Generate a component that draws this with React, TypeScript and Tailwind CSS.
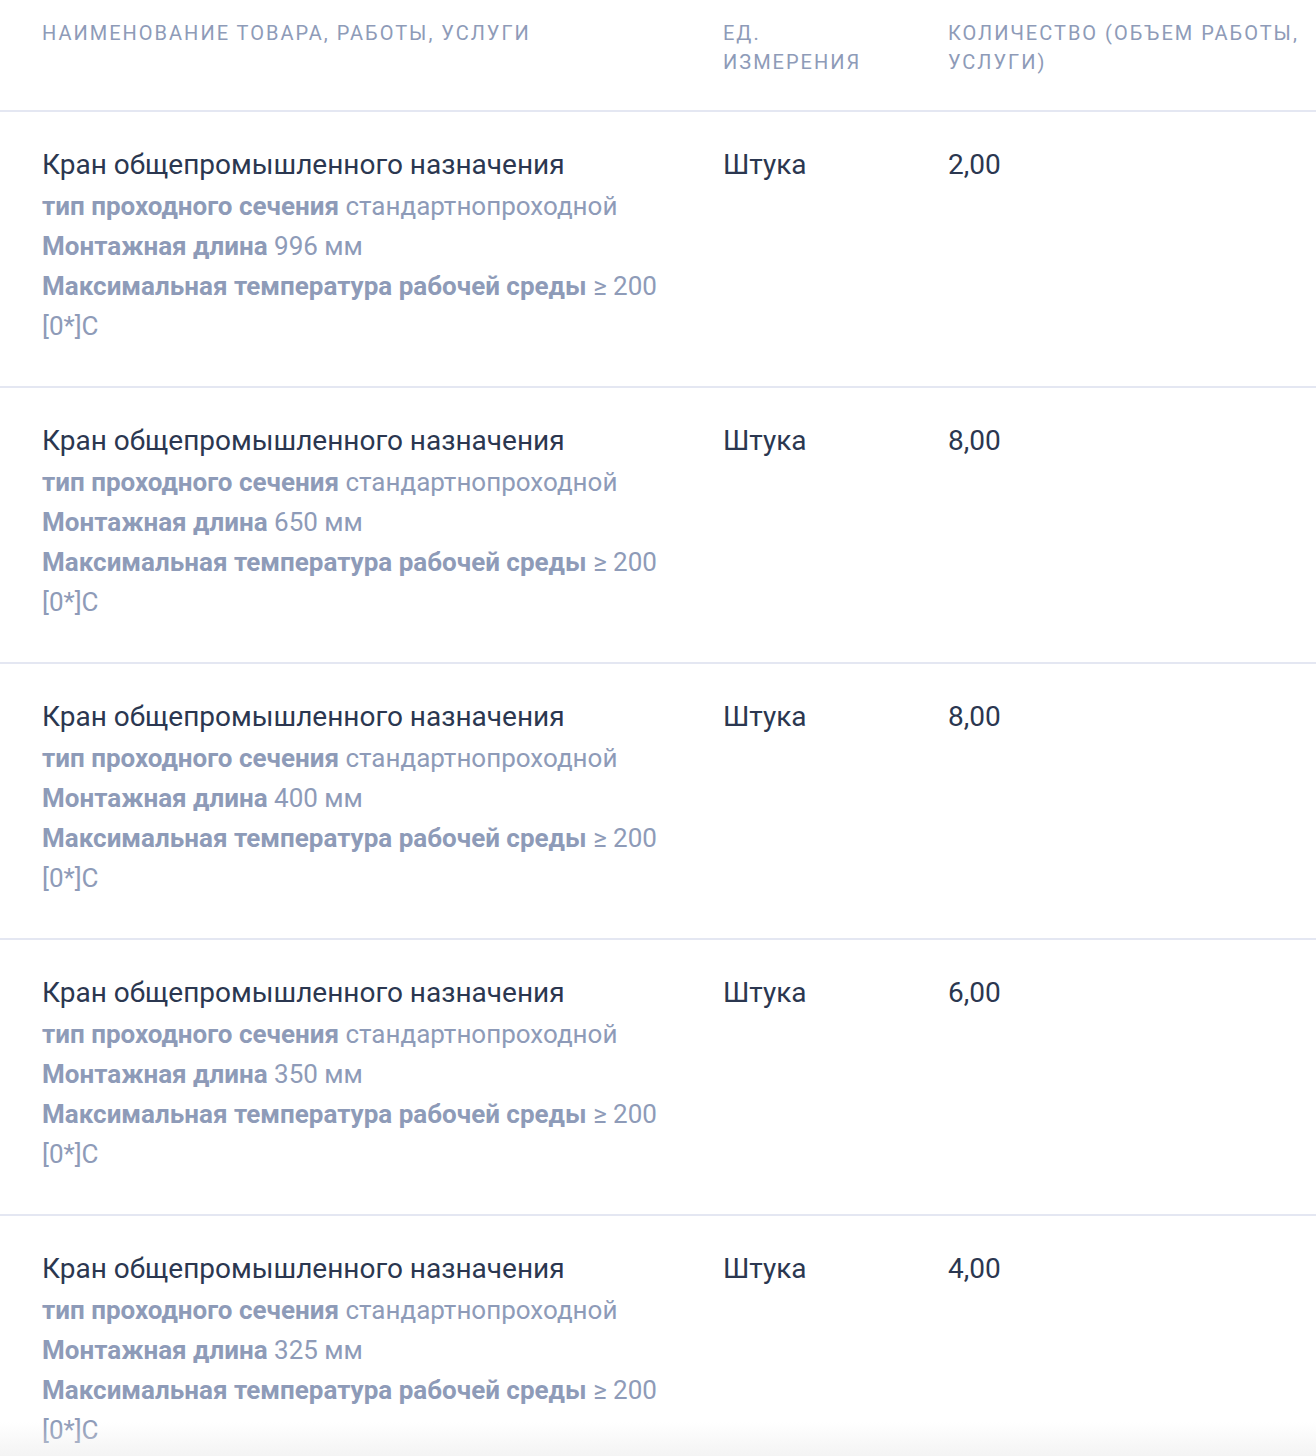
import React from "react";

interface Item {
  length: number;
  unit: string;
  qty: string;
}

const items: Item[] = [
  { length: 996, unit: "Штука", qty: "2,00" },
  { length: 650, unit: "Штука", qty: "8,00" },
  { length: 400, unit: "Штука", qty: "8,00" },
  { length: 350, unit: "Штука", qty: "6,00" },
  { length: 325, unit: "Штука", qty: "4,00" },
];

const Attr = ({ label, value }: { label: string; value: string }) => (
  <p className="text-[#8e9bb8]">
    <span className="font-bold">{label}</span> {value}
  </p>
);

export default function App() {
  return (
    <div
      className="relative min-h-[1456px] w-[1316px] overflow-hidden bg-white"
      style={{ fontFamily: "Roboto, 'Liberation Sans', sans-serif" }}
    >
      {/* Header */}
      <div className="flex border-b-2 border-[#e4e7f2] pt-[19px] pb-[33px] text-[20px] leading-[29px] uppercase tracking-[0.1em] text-[#8e9bb8]">
        <div className="w-[723px] shrink-0 pl-[42px] pr-[40px]">Наименование товара, работы, услуги</div>
        <div className="w-[225px] shrink-0 pr-[50px]">Ед. измерения</div>
        <div className="flex-1">Количество (объем работы, услуги)</div>
      </div>

      {items.map((it, i) => (
        <div
          key={i}
          className="flex border-b-2 border-[#e4e7f2] pt-[33px] pb-[40px] text-[26px] leading-[40px]"
        >
          <div className="w-[723px] shrink-0 pl-[42px] pr-[40px]">
            <p className="mb-[1px] text-[28px] text-[#2b3750]">Кран общепромышленного назначения</p>
            <Attr label="тип проходного сечения" value="стандартнопроходной" />
            <Attr label="Монтажная длина" value={`${it.length} мм`} />
            <Attr label="Максимальная температура рабочей среды" value="≥ 200 [0*]C" />
          </div>
          <div className="w-[225px] shrink-0 pr-[40px] text-[28px] text-[#2b3750]">{it.unit}</div>
          <div className="flex-1 text-[28px] text-[#2b3750]">{it.qty}</div>
        </div>
      ))}

      {/* bottom fade */}
      <div className="pointer-events-none absolute inset-x-0 bottom-0 h-[70px] bg-gradient-to-b from-white/0 to-[#e8e8e8]" />
    </div>
  );
}
